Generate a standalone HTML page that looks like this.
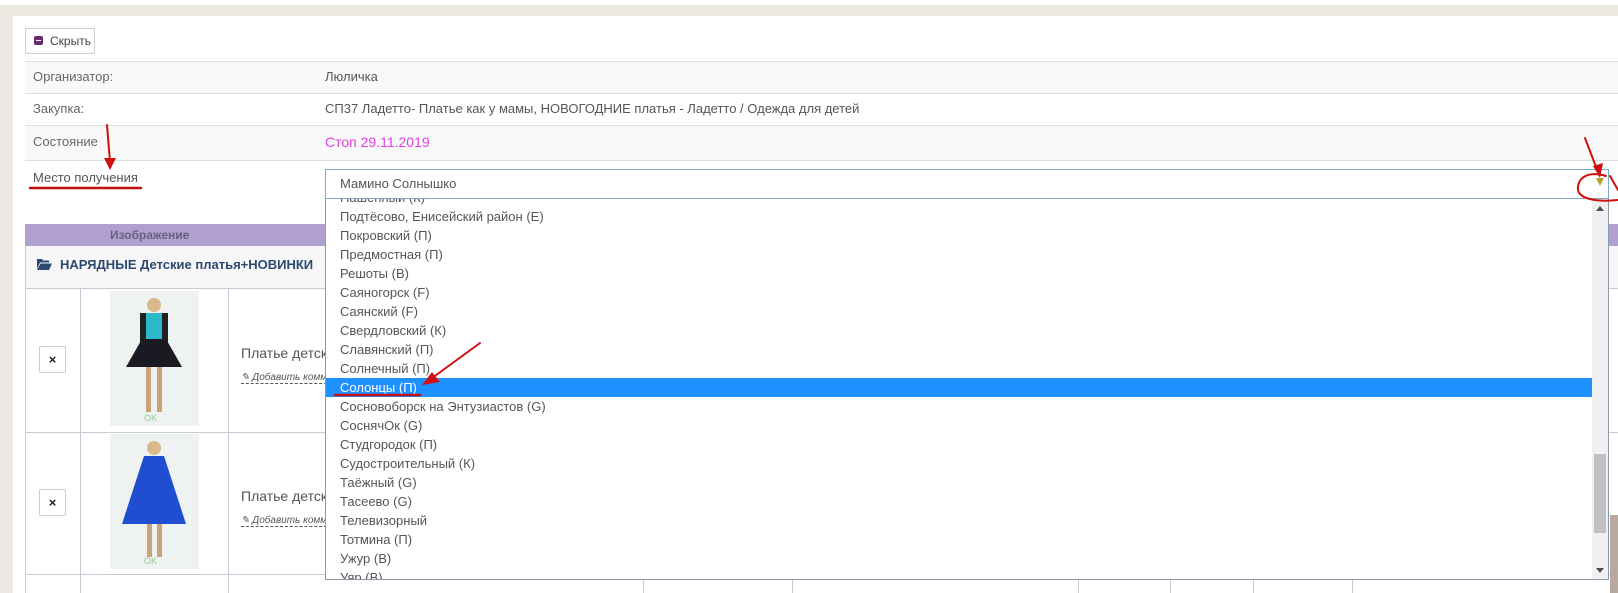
<!DOCTYPE html>
<html><head><meta charset="utf-8"><style>
*{margin:0;padding:0;box-sizing:border-box}
body{width:1618px;height:593px;overflow:hidden;position:relative;background:#ebe9e2;font-family:"Liberation Sans",sans-serif;font-size:13px;color:#555}
.a{position:absolute}
.panel{left:13px;top:16px;width:1605px;height:577px;background:#fff}
.lbl{left:33px;color:#666}
.val{left:325px;color:#555}
.hl{height:1px;background:#ddd;left:25px;width:1593px}
.item{width:1266px;height:19px;line-height:19px;padding-left:14px;color:#555;white-space:nowrap}
</style></head><body>
<div class="a" style="left:0;top:0;width:1618px;height:5px;background:#fff"></div>
<div class="a panel"></div>
<div class="a" style="left:25px;top:28px;width:70px;height:26px;border:1px solid #ccc;border-radius:2px;background:#fff;font-size:12px;line-height:24px;padding-left:24px;color:#444">Скрыть</div>
<div class="a" style="left:34px;top:36px;width:9px;height:9px;background:#6b2a6e;border-radius:2px"></div>
<div class="a" style="left:36px;top:40px;width:5px;height:1px;background:#fff"></div>

<div class="a" style="left:25px;top:61px;width:1593px;height:32px;background:#f9f9f9"></div>
<div class="a" style="left:25px;top:125px;width:1593px;height:35px;background:#f9f9f9"></div>
<div class="a hl" style="top:61px"></div>
<div class="a hl" style="top:93px"></div>
<div class="a hl" style="top:125px"></div>
<div class="a hl" style="top:160px"></div>
<div class="a lbl" style="top:69px">Организатор:</div>
<div class="a val" style="top:69px">Люличка</div>
<div class="a lbl" style="top:101px">Закупка:</div>
<div class="a val" style="top:101px">СП37 Ладетто- Платье как у мамы, НОВОГОДНИЕ платья - Ладетто / Одежда для детей</div>
<div class="a lbl" style="top:134px">Состояние</div>
<div class="a val" style="top:134px;color:#e040e0;font-size:14px">Стоп 29.11.2019</div>
<div class="a lbl" style="top:170px;color:#555">Место получения</div>

<div class="a" style="left:25px;top:224px;width:1593px;height:22px;background:#b0a0d0"></div>
<div class="a" style="left:110px;top:228px;font-weight:bold;color:#6a5e84;font-size:12px">Изображение</div>
<div class="a" style="left:25px;top:246px;width:1593px;height:42px;background:#f7f7f9;border-left:1px solid #ccc8d8"></div>
<div class="a" style="left:60px;top:257px;font-weight:bold;color:#2b4a6e;font-size:13px">НАРЯДНЫЕ Детские платья+НОВИНКИ</div>
<svg class="a" style="left:37px;top:258px" width="15" height="12" viewBox="0 0 15 12"><path d="M0 1h5l1 1.5h6v2H3L0 11z" fill="#2b4a6e"/><path d="M3.5 5.5H15L12 12H0z" fill="#2b4a6e"/></svg>
<div class="a" style="left:25px;top:288px;width:1593px;height:1px;background:#ccc8d8"></div>
<div class="a" style="left:25px;top:432px;width:1593px;height:1px;background:#ccc8d8"></div>
<div class="a" style="left:25px;top:574px;width:1593px;height:1px;background:#ccc8d8"></div>
<div class="a" style="left:25px;top:288px;width:1px;height:305px;background:#ccc8d8"></div>
<div class="a" style="left:80px;top:288px;width:1px;height:305px;background:#ccc8d8"></div>
<div class="a" style="left:228px;top:288px;width:1px;height:305px;background:#ccc8d8"></div>
<div class="a" style="left:643px;top:580px;width:1px;height:13px;background:#ccc8d8"></div>
<div class="a" style="left:792px;top:580px;width:1px;height:13px;background:#ccc8d8"></div>
<div class="a" style="left:1078px;top:580px;width:1px;height:13px;background:#ccc8d8"></div>
<div class="a" style="left:1170px;top:580px;width:1px;height:13px;background:#ccc8d8"></div>
<div class="a" style="left:1253px;top:580px;width:1px;height:13px;background:#ccc8d8"></div>
<div class="a" style="left:1352px;top:580px;width:1px;height:13px;background:#ccc8d8"></div>

<div class="a" style="left:39px;top:346px;width:27px;height:27px;border:1px solid #ccc;border-radius:2px;background:#fff;text-align:center;line-height:25px;font-weight:bold;color:#222">×</div>
<div class="a" style="left:39px;top:489px;width:27px;height:27px;border:1px solid #ccc;border-radius:2px;background:#fff;text-align:center;line-height:25px;font-weight:bold;color:#222">×</div>
<svg class="a" style="left:110px;top:291px" width="89" height="135" viewBox="0 0 89 135"><rect width="89" height="135" fill="#eef2f0"/><circle cx="44" cy="14" r="7" fill="#d9b98a"/><rect x="34" y="22" width="20" height="28" fill="#2cb8c8"/><rect x="30" y="22" width="6" height="30" fill="#222"/><rect x="52" y="22" width="6" height="30" fill="#222"/><path d="M32 48h24l16 28H16z" fill="#1a1a22"/><rect x="36" y="76" width="5" height="45" fill="#c9a27e"/><rect x="47" y="76" width="5" height="45" fill="#c9a27e"/><text x="34" y="130" font-size="9" fill="#8fcf8f" font-family="Liberation Sans">OK</text></svg>
<svg class="a" style="left:110px;top:434px" width="89" height="135" viewBox="0 0 89 135"><rect width="89" height="135" fill="#eef2f0"/><circle cx="44" cy="14" r="7" fill="#d9b98a"/><path d="M34 22h20l22 68H12z" fill="#1f4fd0"/><rect x="37" y="90" width="5" height="33" fill="#c9a27e"/><rect x="47" y="90" width="5" height="33" fill="#c9a27e"/><text x="34" y="130" font-size="9" fill="#8fcf8f" font-family="Liberation Sans">OK</text></svg>
<div class="a" style="left:241px;top:345px;font-size:14px;color:#555">Платье детское</div>
<div class="a" style="left:241px;top:488px;font-size:14px;color:#555">Платье детское</div>
<div class="a" style="left:241px;top:372px;font-size:10px;font-style:italic;color:#555;border-bottom:1px dashed #555">✎ Добавить комм</div>
<div class="a" style="left:241px;top:515px;font-size:10px;font-style:italic;color:#555;border-bottom:1px dashed #555">✎ Добавить комм</div>

<div class="a" style="left:325px;top:169px;width:1284px;height:30px;border:1px solid #7fa7cf;background:#fff;line-height:28px;padding-left:14px;color:#555">Мамино Солнышко</div>
<svg class="a" style="left:1596px;top:178px" width="8" height="8"><path d="M0 0h8L4 8z" fill="#b8a030"/></svg>
<div class="a" style="left:1609px;top:224px;width:9px;height:22px;background:#b0a0d0"></div>
<div class="a" style="left:325px;top:199px;width:1284px;height:381px;border:1px solid #8a9aaa;border-top:none;background:#fff;overflow:hidden">
 <div style="position:relative;top:-11px">
 <div class="item">Нашенный (К)</div>
 <div class="item">Подтёсово, Енисейский район (Е)</div>
 <div class="item">Покровский (П)</div>
 <div class="item">Предмостная (П)</div>
 <div class="item">Решоты (В)</div>
 <div class="item">Саяногорск (F)</div>
 <div class="item">Саянский (F)</div>
 <div class="item">Свердловский (К)</div>
 <div class="item">Славянский (П)</div>
 <div class="item">Солнечный (П)</div>
 <div class="item" style="background:#1e90ff;color:#fff">Солонцы (П)</div>
 <div class="item">Сосновоборск на Энтузиастов (G)</div>
 <div class="item">СоснячОк (G)</div>
 <div class="item">Студгородок (П)</div>
 <div class="item">Судостроительный (К)</div>
 <div class="item">Таёжный (G)</div>
 <div class="item">Тасеево (G)</div>
 <div class="item">Телевизорный</div>
 <div class="item">Тотмина (П)</div>
 <div class="item">Ужур (В)</div>
 <div class="item">Уяр (В)</div>
 </div>
</div>
<div class="a" style="left:1592px;top:199px;width:16px;height:380px;background:#f0f0f0"></div>
<div class="a" style="left:1594px;top:454px;width:12px;height:79px;background:#c1c1c1"></div>
<svg class="a" style="left:1596px;top:206px" width="8" height="5"><path d="M0 5h8L4 0z" fill="#505050"/></svg>
<svg class="a" style="left:1596px;top:568px" width="8" height="5"><path d="M0 0h8L4 5z" fill="#505050"/></svg>
<div class="a" style="left:1610px;top:515px;width:8px;height:78px;background:#b8a8a0"></div>

<svg class="a" style="left:0;top:0" width="1618" height="593">
<g stroke="#d01010" stroke-width="2" fill="none" stroke-linecap="round">
<path d="M107 125L110 162"/>
<path d="M30 188H141" stroke="#c01010" stroke-width="2.5"/>
<path d="M1585 138L1598 172"/>
<path d="M480 343L428 381"/>
<path d="M335 395H420" stroke="#c01010" stroke-width="2.5"/>
<path d="M1606 176C1585 170 1577 180 1578 190C1580 200 1600 202 1618 200"/>
<path d="M1610 176L1618 190"/>
</g>
<path d="M104 158L116 158L110 170z" fill="#d01010"/>
<path d="M1593 166L1603 163L1600 178z" fill="#d01010"/>
<path d="M432 372L440 382L422 385z" fill="#d01010"/>
</svg>
</body></html>
